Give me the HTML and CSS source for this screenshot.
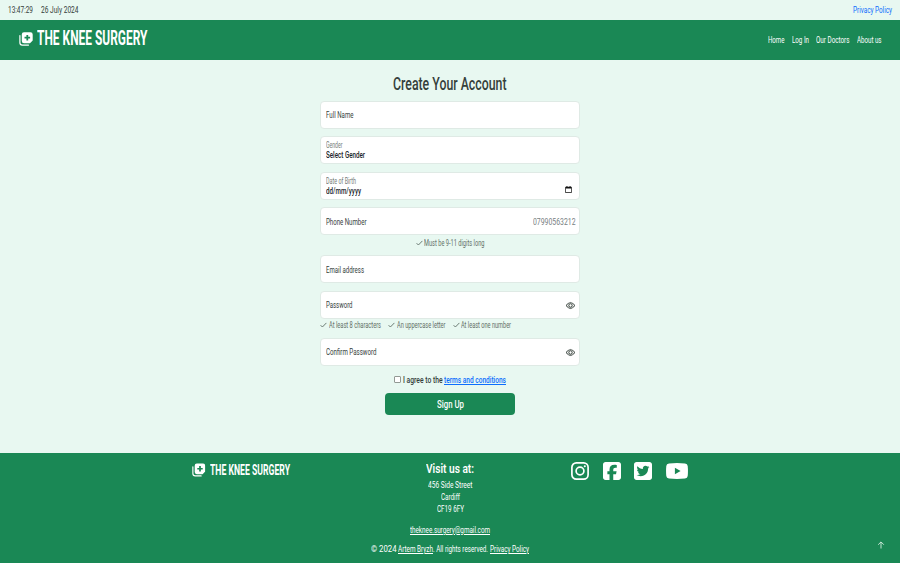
FILE: index.html
```html
<!DOCTYPE html>
<html lang="en">
<head>
<meta charset="utf-8">
<title>The Knee Surgery</title>
<link rel="stylesheet" href="styles.css">
</head>
<body>
<svg width="0" height="0" class="defs" aria-hidden="true">
  <symbol id="logo" viewBox="0 0 14 14"><path d="M.9 3.6v7.1q0 2.4 2.4 2.4h6.2" fill="none" stroke="#fff" stroke-width="1.2" stroke-linecap="round"/><path fill="#fff" fill-rule="evenodd" d="M5 .3h6.5q2.2 0 2.2 2.2v6L11 11.3H5q-2.2 0-2.2-2.2V2.5Q2.800.3 5 .3zM7.400 2.900v1.900H5.500v1.800h1.900v1.900h1.800V6.600h1.900V4.800H9.200V2.900z"/></symbol>
  <symbol id="check" viewBox="0 0 7 6"><path d="M.6 3.200 2.400 5 6.400.9" fill="none" stroke="currentColor" stroke-width=".9"/></symbol>
  <symbol id="eye" viewBox="0 0 16 16"><path fill="currentColor" stroke="currentColor" stroke-width=".5" d="M16 8s-3-5.500-8-5.500S0 8 0 8s3 5.500 8 5.500S16 8 16 8M1.173 8a13 13 0 0 1 1.660-2.043C4.120 4.668 5.880 3.500 8 3.500s3.879 1.168 5.168 2.457A13 13 0 0 1 14.828 8a13 13 0 0 1-1.660 2.043C11.879 11.332 10.119 12.500 8 12.500s-3.879-1.168-5.168-2.457A13 13 0 0 1 1.172 8z"/><path fill="currentColor" stroke="currentColor" stroke-width=".5" d="M8 5.500a2.500 2.500 0 1 0 0 5 2.500 2.500 0 0 0 0-5M4.500 8a3.500 3.500 0 1 1 7 0 3.500 3.500 0 0 1-7 0"/></symbol>
</svg>
<div class="topbar"><span class="fit" data-w="25">13:47:29</span><span class="fit date" data-w="37.5">26 July 2024</span><a class="push"><span class="fit" data-w="39">Privacy Policy</span></a></div>
<header>
  <div class="brand"><svg class="mark"><use href="#logo"/></svg><span class="fit" data-w="110.5">THE KNEE SURGERY</span></div>
  <nav><span class="fit" data-w="16.500">Home</span><span class="fit" data-w="17">Log In</span><span class="fit" data-w="33.500">Our Doctors</span><span class="fit" data-w="24.500">About us</span></nav>
</header>
<main>
  <h1><span class="fit" data-w="113.500">Create Your Account</span></h1>
  <form>
    <div class="field"><span class="fit" data-w="27.500">Full Name</span></div>
    <div class="field two"><small><span class="fit" data-w="16.500">Gender</span></small><b><span class="fit" data-w="39">Select Gender</span></b></div>
    <div class="field two"><small><span class="fit" data-w="30">Date of Birth</span></small><b><span class="fit" data-w="35">dd/mm/yyyy</span></b>
      <svg class="cal" viewBox="0 0 7 7"><path fill="#111" fill-rule="evenodd" d="M.8.700h.7V0h.9v.7h2.200V0h.9v.7h.7q.6 0 .6.6v5q0 .6-.6.6H.8q-.6 0-.6-.6v-5Q.200.700.800.700zM.9 2.500v3.700h5.200V2.500z"/></svg></div>
    <div class="field"><span class="fit" data-w="40.500">Phone Number</span><span class="fit push sample" data-w="42.500">07990563212</span></div>
    <div class="hint center"><svg><use href="#check"/></svg><span class="fit" data-w="60.500">Must be 9-11 digits long</span></div>
    <div class="field"><span class="fit" data-w="38">Email address</span></div>
    <div class="field"><span class="fit" data-w="26.500">Password</span><svg class="eye push"><use href="#eye"/></svg></div>
    <div class="hint rules"><svg><use href="#check"/></svg><span class="fit" data-w="52">At least 8 characters</span><svg><use href="#check"/></svg><span class="fit" data-w="48.500">An uppercase letter</span><svg><use href="#check"/></svg><span class="fit" data-w="50">At least one number</span></div>
    <div class="field last"><span class="fit" data-w="50.500">Confirm Password</span><svg class="eye push"><use href="#eye"/></svg></div>
    <div class="agree"><i class="box"></i><span class="fit" data-w="39.500">I agree to the</span><a><span class="fit" data-w="62">terms and conditions</span></a></div>
    <div class="button"><span class="fit" data-w="27">Sign Up</span></div>
  </form>
</main>
<footer>
  <div class="cols">
    <div class="brand small"><svg class="mark"><use href="#logo"/></svg><span class="fit" data-w="80">THE KNEE SURGERY</span></div>
    <div class="visit">
      <h2><span class="fit" data-w="48">Visit us at:</span></h2>
      <p><span class="fit" data-w="44.500">456 Side Street</span></p>
      <p><span class="fit" data-w="19">Cardiff</span></p>
      <p><span class="fit" data-w="27">CF19 6FY</span></p>
      <p class="mail"><span class="fit u" data-w="80">theknee.surgery@gmail.com</span></p>
    </div>
    <div class="social">
      <svg width="18" height="18" viewBox="0 0 18 18" fill="none" stroke="#fff"><rect x=".9" y=".9" width="16.200" height="16.200" rx="4.400" stroke-width="1.700"/><circle cx="9" cy="9" r="3.900" stroke-width="1.700"/><circle cx="13.800" cy="4.300" r="1.050" fill="#fff" stroke="none"/></svg>
      <svg width="18" height="18" viewBox="0 0 448 448"><path fill="#fff" d="M64 0C29 0 0 29 0 64v320c0 35 29 64 64 64h98V306h-53v-78h53v-34c0-87 39-128 125-128 16 0 44 3 56 6v71c-6-1-16-1-30-1-42 0-58 16-58 57v29h83l-14 78h-69v142h129c35 0 64-29 64-64V64c0-35-29-64-64-64z"/></svg>
      <svg width="18" height="18" viewBox="0 0 448 448"><path fill="#fff" fill-rule="evenodd" d="M64 0C29 0 0 29 0 64v320c0 35 29 64 64 64h320c35 0 64-29 64-64V64c0-35-29-64-64-64zM351 159c0 3 0 6 0 8 0 87-66 187-187 187-37 0-72-11-101-29 5 1 10 1 16 1 31 0 59-11 82-28-29-1-53-20-61-46 10 1 19 1 29-1-30-6-53-33-53-65v-1c9 5 19 8 30 8-18-12-29-33-29-54 0-12 3-24 9-33 32 40 81 66 135 69-10-46 24-81 64-81 19 0 36 8 48 21 15-3 29-9 42-16-5 15-15 28-29 36 13-1 26-5 38-10-9 13-20 25-33 34z"/></svg>
      <svg class="yt" width="22" height="16" viewBox="0 0 22 16"><path fill="#fff" fill-rule="evenodd" d="M3 .4Q11-.3 19 .4 21.500.600 21.700 3q.5 5 0 10-.2 2.300-2.700 2.600-8 .7-16 0Q.500 15.300.300 13q-.5-5 0-10Q.500.600 3 .4zM8.900 4.700v6.600L14.600 8z"/></svg>
    </div>
  </div>
  <div class="copy"><span class="fit" data-w="25.500">© 2024</span><span class="fit u" data-w="35">Artem Bryzh</span><span class="fit dot" data-w="55">. All rights reserved.</span><span class="fit u" data-w="39">Privacy Policy</span></div>
  <svg class="up" viewBox="0 0 8 8"><path d="M4 7.500V1M1.200 3.700 4 .9l2.800 2.800" fill="none" stroke="#d5eee0" stroke-width=".9"/></svg>
</footer>
<script src="fit.js"></script>
</body>
</html>
```
FILE: styles.css
```css
* { box-sizing: border-box; }
body { margin: 0; height: 563px; overflow: hidden; display: flex; flex-direction: column; background: #e8f8f1; color: #35403b; font: 400 9.600px/12px Roboto, "Liberation Sans", sans-serif; }
.defs { position: absolute; }
.fit { display: inline-block; white-space: nowrap; transform-origin: 0 50%; flex: none; }
.push { margin-left: auto; }
.u { text-decoration: underline; }
h1, h2, p { margin: 0; }
svg { display: block; flex: none; }
.topbar { height: 20px; display: flex; align-items: center; gap: 7.500px; padding: 0 8px; }
.topbar a { color: #0d6efd; }
header { height: 40px; background: #1a8855; color: #fff; display: flex; justify-content: space-between; padding: 0 18.500px 0 19px; }
.brand { display: flex; font-weight: 700; font-size: 19.500px; line-height: 37px; gap: 4px; }
.brand .mark { width: 14px; height: 14px; margin-top: 12px; }
header .brand .fit { margin-left: -.5px; }
nav { display: flex; align-items: center; gap: 7.500px; }
main { flex: 1; }
h1 { font-size: 17.800px; font-weight: 500; line-height: 24px; margin-top: 11.500px; text-align: center; }
form { width: 260px; margin: 5px auto 0; }
.field { height: 28px; margin-bottom: 7.600px; background: #fff; border: 1px solid #dfeae5; border-radius: 4px; display: flex; align-items: center; padding: 1px 4px 0 5.400px; font-size: 9.600px; }
.two { position: relative; flex-direction: column; align-items: flex-start; padding-top: 4px; }
.two small, .two b { display: block; line-height: 9px; height: 9px; }
.two small { font-size: 8.200px; color: #737b77; }
.two b { font-weight: 500; font-size: 9.400px; color: #20252a; }
.cal { position: absolute; width: 7px; height: 7px; right: 7px; top: 13px; }
.sample { color: #777e82; }
.hint { display: flex; align-items: center; height: 12px; margin: -5.600px 0 6.500px; font-size: 9px; color: #5f6e66; }
.hint svg { width: 7px; height: 6px; margin-right: 1.500px; }
.center { justify-content: center; margin-top: -6px; margin-bottom: 6.500px; }
.rules { margin-top: -7.500px; }
.rules .fit + svg { margin-left: 7.500px; }
.eye { width: 9px; height: 9px; }
.last { margin-bottom: 8px; }
.agree { display: flex; justify-content: center; align-items: center; height: 12px; font-weight: 500; }
.agree a { color: #0d6efd; margin-left: 2px; }
.agree a .fit { text-decoration: underline; }
.box { width: 6.500px; height: 6.500px; border: 1px solid #929994; border-radius: 1px; background: #fff; margin-right: 2px; }
.button { width: 130px; height: 22px; margin: 7px auto 0; border-radius: 4px; background: #1a8855; color: #fff; font-size: 11.800px; font-weight: 500; line-height: 23px; text-align: center; }
footer { position: relative; height: 110px; background: #1a8855; color: #fff; }
.cols { display: grid; grid-template-columns: 192px 168px 180px 1fr; height: 90px; }
.small { grid-column: 2; font-size: 14.600px; line-height: 35px; }
.small .mark { width: 13.500px; height: 14px; margin-top: 10px; }
.visit { text-align: center; }
.visit h2 { font-size: 13.600px; line-height: 18px; font-weight: 600; padding-top: 6px; height: 26px; }
.visit p { height: 12.200px; line-height: 12.200px; }
.visit .mail { margin-top: 8px; }
.social { display: flex; gap: 13.500px; padding: 8.500px 0 0 31px; }
.yt { margin-top: 1px; }
.copy { display: flex; justify-content: center; height: 12px; }
.copy .u { margin-left: 1.300px; }
.up { position: absolute; width: 8px; height: 8px; right: 15px; bottom: 14px; }
```
FILE: fit.js
```js
// Condense each label horizontally to its design width.
document.querySelectorAll('.fit').forEach(function (el) {
  var target = parseFloat(el.dataset.w);
  var natural = el.getBoundingClientRect().width;
  el.style.transform = 'scaleX(' + target / natural + ')';
  el.style.marginRight = (target - natural) + 'px';
});
```
